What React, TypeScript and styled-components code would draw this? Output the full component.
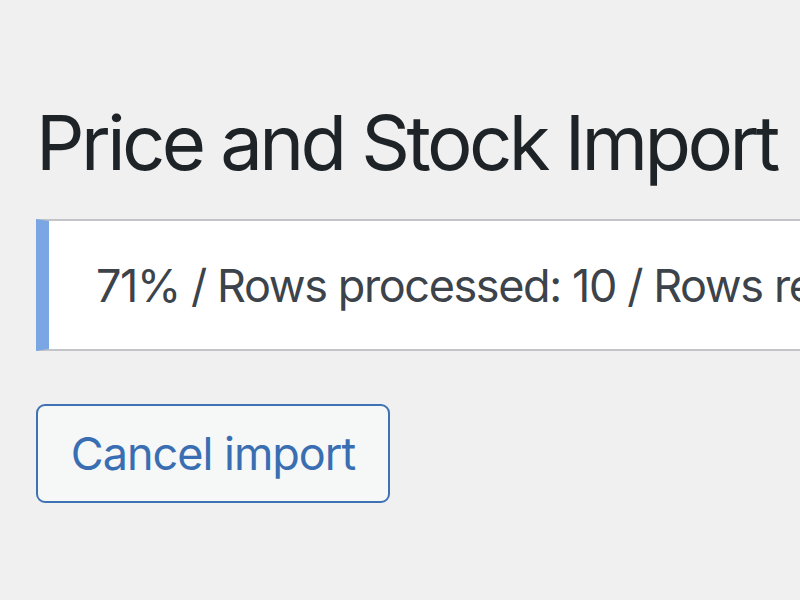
import styled, { createGlobalStyle } from "styled-components";

const GlobalStyle = createGlobalStyle`
  html, body {
    margin: 0;
    padding: 0;
    background: #f0f0f1;
    overflow: hidden;
  }
  body {
    font-family: Inter, "Noto Sans", "Liberation Sans", sans-serif;
    -webkit-font-smoothing: antialiased;
  }
`;

const Wrap = styled.div`
  width: 1400px;
  padding: 0 0 0 36px;
  display: flex;
  flex-direction: column;
  align-items: flex-start;
`;

const Title = styled.h1`
  margin: 92px 0 0 0;
  font-size: 76px;
  font-weight: 400;
  line-height: 100px;
  color: #1d2327;
  letter-spacing: -3.6px;
`;

const Notice = styled.div`
  margin-top: 27px;
  width: 100%;
  box-sizing: border-box;
  height: 132px;
  background: #fff;
  border: 2px solid #c3c4c7;
  border-left: 13px solid #7aa7e3;
  display: flex;
  align-items: center;
  padding-left: 47px;
`;

const NoticeText = styled.p`
  margin: 0;
  font-size: 45px;
  color: #3c434a;
  white-space: nowrap;
  letter-spacing: -1.4px;
`;

const Button = styled.button`
  margin-top: 53px;
  width: 354px;
  height: 99px;
  box-sizing: border-box;
  border: 2.5px solid #3f72b5;
  border-radius: 9px;
  background: #f6f7f7;
  color: #3a6eb2;
  font-family: inherit;
  font-size: 45px;
  letter-spacing: -1px;
  padding: 0;
  cursor: pointer;
`;

export default function App() {
  return (
    <>
      <GlobalStyle />
      <Wrap>
        <Title>Price and Stock Import</Title>
        <Notice>
          <NoticeText>71% / Rows processed: 10 / Rows remaining: 4</NoticeText>
        </Notice>
        <Button>Cancel import</Button>
      </Wrap>
    </>
  );
}
